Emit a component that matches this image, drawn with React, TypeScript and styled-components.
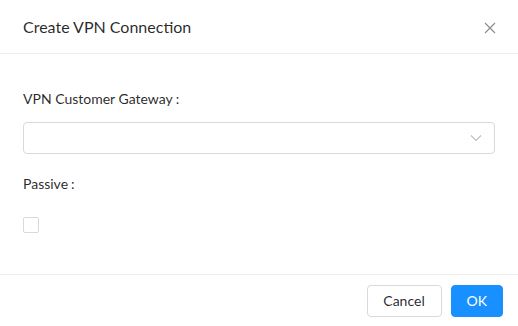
import React from "react";
import styled, { createGlobalStyle } from "styled-components";

const Global = createGlobalStyle`
  html, body { margin: 0; padding: 0; background: #fff; }
  body { font-family: "Lato", "Liberation Sans", sans-serif; color: rgba(0,0,0,0.85); }
  * { box-sizing: border-box; }
`;

const Dialog = styled.div`
  width: 518px;
  height: 326px;
  display: flex;
  flex-direction: column;
  background: #fff;
`;

const Header = styled.div`
  height: 54px;
  padding: 0 21px 0 23px;
  display: flex;
  align-items: center;
  justify-content: space-between;
  border-bottom: 1px solid #ececec;
`;

const Title = styled.div`
  font-size: 16px;
  line-height: 22px;
  color: rgba(0,0,0,0.85);
  margin-top: 1px;
`;

const Close = styled.button`
  width: 14px;
  height: 14px;
  padding: 0;
  border: 0;
  background: none;
  display: flex;
  align-items: center;
  justify-content: center;
  color: rgba(0,0,0,0.45);
  margin-top: 2px;
`;

const Body = styled.div`
  flex: 1;
  padding: 34px 23px 0 23px;
  display: flex;
  flex-direction: column;
`;

const Label = styled.label<{ $gap: number }>`
  font-size: 14px;
  line-height: 22px;
  height: 22px;
  display: block;
  margin-bottom: ${(p) => p.$gap}px;
  color: rgba(0,0,0,0.85);
  &::after {
    content: ":";
    margin-left: 3px;
  }
`;

const Select = styled.div`
  height: 32px;
  width: 472px;
  border: 1px solid #d9d9d9;
  border-radius: 4px;
  display: flex;
  align-items: center;
  justify-content: flex-end;
  padding-right: 12px;
  color: #bfbfbf;
  margin-bottom: 19px;
`;

const Check = styled.span`
  width: 16px;
  height: 16px;
  border: 1px solid #d9d9d9;
  border-radius: 2px;
  display: block;
`;

const Footer = styled.div`
  height: 52px;
  border-top: 1px solid #ececec;
  display: flex;
  align-items: center;
  justify-content: flex-end;
  gap: 9px;
  padding: 0 15px 0 0;
`;

const Button = styled.button<{ $primary?: boolean }>`
  height: 32px;
  padding: 0 15px;
  font-family: inherit;
  font-size: 14px;
  border-radius: 4px;
  border: 1px solid ${(p) => (p.$primary ? "#1890ff" : "#d9d9d9")};
  background: ${(p) => (p.$primary ? "#1890ff" : "#fff")};
  color: ${(p) => (p.$primary ? "#fff" : "rgba(0,0,0,0.85)")};
  min-width: ${(p) => (p.$primary ? 51 : 75)}px;
`;

export default function App() {
  return (
    <>
      <Global />
      <Dialog>
        <Header>
          <Title>Create VPN Connection</Title>
          <Close aria-label="Close">
            <svg width="12" height="12" viewBox="0 0 12 12">
              <path d="M1 1L11 11M11 1L1 11" stroke="currentColor" strokeWidth="1.2" fill="none" />
            </svg>
          </Close>
        </Header>
        <Body>
          <Label $gap={12}>VPN Customer Gateway</Label>
          <Select>
            <svg width="12" height="8" viewBox="0 0 12 8">
              <path d="M1 1.5L6 6.5L11 1.5" stroke="currentColor" strokeWidth="1.1" fill="none" />
            </svg>
          </Select>
          <Label $gap={22}>Passive</Label>
          <Check />
        </Body>
        <Footer>
          <Button>Cancel</Button>
          <Button $primary>OK</Button>
        </Footer>
      </Dialog>
    </>
  );
}
